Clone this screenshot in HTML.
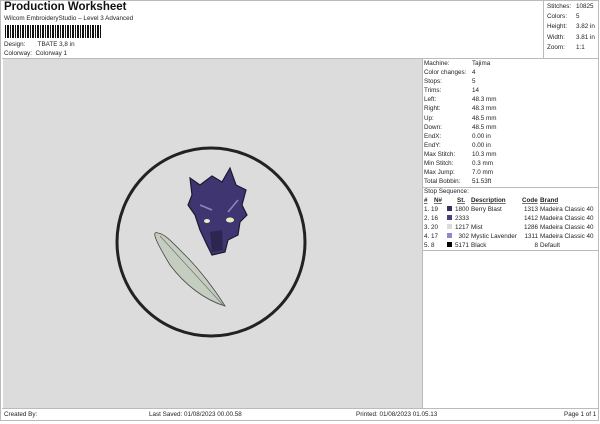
<!DOCTYPE html><html><head><style>
body{margin:0;width:600px;height:424px;background:#fff;font-family:"Liberation Sans",sans-serif;font-size:6.3px;color:#222;position:relative;overflow:hidden}
.a{position:absolute;white-space:nowrap}
.r{position:absolute;left:424px;width:174px}
.r div{height:9.1px;line-height:9.1px;position:relative}
.r span{position:absolute;left:48px}
</style></head><body>
<div class="a" style="left:0;top:0;width:599px;height:421px;border:1px solid #bbb;box-sizing:border-box"></div>
<div class="a" style="left:4px;top:1px;font-size:11.5px;font-weight:bold;color:#111">Production Worksheet</div>
<div class="a" style="left:4px;top:15px;font-size:6.3px">Wilcom EmbroideryStudio – Level 3 Advanced</div>
<div class="a" style="left:5px;top:25px;height:13px;width:96px;background:repeating-linear-gradient(90deg,#111 0 1px,#fff 1px 2px,#111 2px 4px,#fff 4px 5px)"></div>
<div class="a" style="left:4px;top:41px">Design:&nbsp;&nbsp;&nbsp;&nbsp;&nbsp;&nbsp;&nbsp;TBATE 3,8 in</div>
<div class="a" style="left:4px;top:50px">Colorway:&nbsp;&nbsp;Colorway 1</div>
<div class="a" style="left:543px;top:0;width:1px;height:58px;background:#bbb"></div>
<div class="a" style="left:547px;top:2px;line-height:10.2px">Stitches:<br>Colors:<br>Height:<br>Width:<br>Zoom:</div>
<div class="a" style="left:576px;top:2px;line-height:10.2px">10825<br>5<br>3.82 in<br>3.81 in<br>1:1</div>
<div class="a" style="left:2px;top:58px;width:596px;height:1px;background:#bbb"></div>
<div class="a" style="left:3px;top:59px;width:419px;height:349px;background:#dcdcdc"></div>
<div class="a" style="left:422px;top:59px;width:1px;height:349px;background:#bbb"></div>
<svg class="a" style="left:0;top:0" width="600" height="424">
<circle cx="211" cy="242" r="94" fill="none" stroke="#222" stroke-width="3"/>
<path d="M158 233 C150 230 158 245 170 265 C185 285 205 300 225 306 C215 290 200 270 185 255 C172 242 165 234 158 233Z" fill="#c5cdc0" stroke="#444" stroke-width="0.8"/>
<path d="M160 236 L223 305" stroke="#666" stroke-width="0.6"/>
<path d="M190 178 L200 185 L212 176 L222 182 L230 168 L236 185 L246 190 L242 205 L247 215 L240 222 L238 235 L228 240 L225 252 L212 255 L207 245 L200 230 L195 215 L188 205 L192 195Z" fill="#3f3570" stroke="#1c1a30" stroke-width="1.2"/>
<path d="M200 205 L212 210 M238 200 L228 212" stroke="#8f88c0" stroke-width="1.5"/>
<ellipse cx="207" cy="221" rx="3" ry="2" fill="#e6ecc0"/><ellipse cx="230" cy="220" rx="4" ry="2.5" fill="#e6ecc0"/>
<path d="M210 232 L222 230 L223 250 L212 252Z" fill="#2d2650"/>
</svg>
<div class="r" style="top:59px">
<div>Machine:<span>Tajima</span></div><div>Color changes:<span>4</span></div><div>Stops:<span>5</span></div><div>Trims:<span>14</span></div><div>Left:<span>48.3 mm</span></div><div>Right:<span>48.3 mm</span></div><div>Up:<span>48.5 mm</span></div><div>Down:<span>48.5 mm</span></div><div>EndX:<span>0.00 in</span></div><div>EndY:<span>0.00 in</span></div><div>Max Stitch:<span>10.3 mm</span></div><div>Min Stitch:<span>0.3 mm</span></div><div>Max Jump:<span>7.0 mm</span></div><div>Total Bobbin:<span>51.53ft</span></div>
</div>
<div class="a" style="left:423px;top:187px;width:175px;height:1px;background:#bbb"></div>
<div class="a" style="left:424px;top:188px">Stop Sequence:</div>
<svg class="a" style="left:423px;top:195px" width="176" height="54" font-family="Liberation Sans" font-size="6.3" fill="#222">
<g font-weight="bold" text-decoration="underline"><text x="1" y="7">#</text><text x="11" y="7">N#</text><text x="34" y="7">St.</text><text x="48" y="7">Description</text><text x="99" y="7">Code</text><text x="117" y="7">Brand</text></g>
<g><text x="1" y="16">1. 19</text><rect x="24" y="11" width="5" height="5" fill="#3a2f62"/><text x="46" y="16" text-anchor="end">1800</text><text x="48" y="16">Berry Blast</text><text x="115" y="16" text-anchor="end">1313</text><text x="117" y="16">Madeira Classic 40</text>
<text x="1" y="25">2. 16</text><rect x="24" y="20" width="5" height="5" fill="#4b3f86"/><text x="46" y="25" text-anchor="end">2333</text><text x="115" y="25" text-anchor="end">1412</text><text x="117" y="25">Madeira Classic 40</text>
<text x="1" y="34">3. 20</text><rect x="24" y="29" width="5" height="5" fill="#d8dcd8"/><text x="46" y="34" text-anchor="end">1217</text><text x="48" y="34">Mist</text><text x="115" y="34" text-anchor="end">1286</text><text x="117" y="34">Madeira Classic 40</text>
<text x="1" y="43">4. 17</text><rect x="24" y="38" width="5" height="5" fill="#9088c8"/><text x="46" y="43" text-anchor="end">302</text><text x="48" y="43">Mystic Lavender</text><text x="115" y="43" text-anchor="end">1311</text><text x="117" y="43">Madeira Classic 40</text>
<text x="1" y="52">5. 8</text><rect x="24" y="47" width="5" height="5" fill="#000"/><text x="46" y="52" text-anchor="end">5171</text><text x="48" y="52">Black</text><text x="115" y="52" text-anchor="end">8</text><text x="117" y="52">Default</text></g>
</svg>
<div class="a" style="left:423px;top:250px;width:175px;height:1px;background:#bbb"></div>
<div class="a" style="left:2px;top:408px;width:596px;height:1px;background:#bbb"></div>
<div class="a" style="left:4px;top:411px">Created By:</div>
<div class="a" style="left:149px;top:411px">Last Saved: 01/08/2023 00.00.58</div>
<div class="a" style="left:356px;top:411px">Printed: 01/08/2023 01.05.13</div>
<div class="a" style="left:564px;top:411px">Page 1 of 1</div>
</body></html>
